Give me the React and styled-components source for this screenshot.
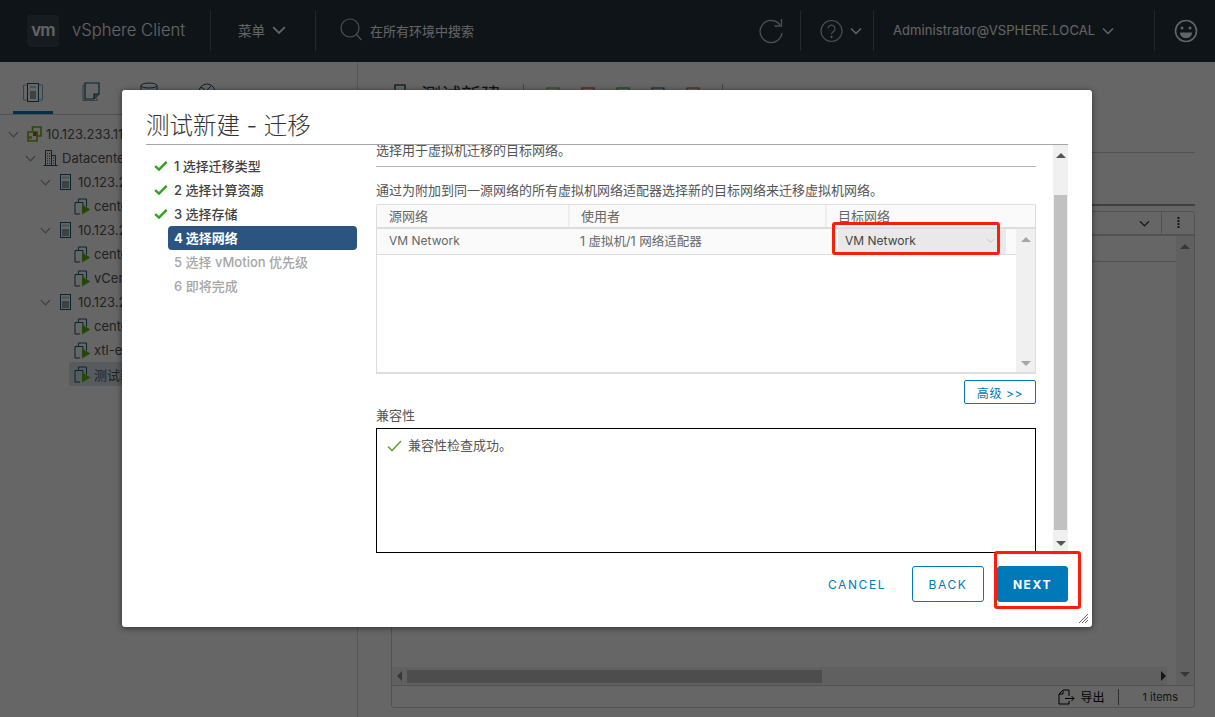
import React from 'react';
import styled, { createGlobalStyle } from 'styled-components';

const sans = `Inter, "Noto Sans CJK SC", sans-serif`;

const GlobalStyle = createGlobalStyle`
  html, body {
    margin: 0;
    padding: 0;
    background: #fff;
  }
  * {
    box-sizing: border-box;
  }
`;

const Page = styled.div`
  position: relative;
  width: 1215px;
  height: 717px;
  overflow: hidden;
  display: flex;
  flex-direction: column;
  font-family: ${sans};
  color: #565656;
`;

/* top bar */
const Header = styled.header`
  flex: 0 0 62px;
  display: flex;
  align-items: center;
  background: #25333d;
  color: #fafafa;
`;

const LogoBox = styled.div`
  width: 32px;
  height: 32px;
  margin-left: 27px;
  border-radius: 3px;
  background: #3a4650;
  display: flex;
  align-items: center;
  justify-content: center;
  padding-bottom: 2px;
  font-size: 17px;
  font-weight: 600;
  letter-spacing: -1px;
  line-height: 1;
`;

const Brand = styled.span`
  margin-left: 13px;
  width: 138px;
  padding-bottom: 2px;
  font-size: 16.6px;
  font-weight: 300;
  white-space: nowrap;
`;

const HeaderDivider = styled.span`
  flex: none;
  width: 1px;
  height: 40px;
  background: #5a666f;
`;

const MenuButton = styled.span`
  display: flex;
  align-items: center;
  gap: 7px;
  width: 104px;
  padding: 0 0 2px 27px;
  font-size: 13.5px;
`;

const Search = styled.div`
  display: flex;
  align-items: center;
  gap: 8px;
  padding: 0 0 2px 24px;
  width: 443px;
  font-size: 13px;
`;

const HeaderIcon = styled.svg`
  opacity: 0.75;
`;

const HeaderIconCell = styled.div`
  display: flex;
  align-items: center;
  gap: 7px;
  width: ${p => p.$width}px;
  padding-left: ${p => p.$pad || 0}px;
`;

const UserName = styled.span`
  font-size: 13px;
  white-space: nowrap;
  width: 202px;
  padding-bottom: 2px;
  letter-spacing: 0.08px;
`;

/* page behind the dialog */
const Body = styled.div`
  flex: 1;
  display: flex;
  min-height: 0;
`;

const Sidebar = styled.aside`
  flex: 0 0 358px;
  border-right: 1px solid #d7d7d7;
  display: flex;
  flex-direction: column;
`;

const SidebarTabs = styled.div`
  flex: 0 0 53px;
  display: flex;
  gap: 18px;
  padding: 0 0 0 13px;
  border-bottom: 1px solid #c9c9c9;
`;

const SidebarTab = styled.div`
  width: 40px;
  height: 52px;
  display: flex;
  justify-content: center;
  padding-top: 20px;
  border-bottom: 3px solid ${p => (p.$active ? '#0079b8' : 'transparent')};
`;

const Tree = styled.div`
  padding-top: 7px;
`;

const TreeRow = styled.div`
  display: flex;
  align-items: center;
  height: 24px;
  padding-left: ${p => p.$indent}px;
  margin-left: ${p => (p.$selected ? 69 : 0)}px;
  background: ${p => (p.$selected ? '#d9e4ea' : 'transparent')};
  border-radius: 3px;
  font-size: 13px;
  white-space: nowrap;
`;

const TreeChevron = styled.span`
  display: flex;
  width: ${p => p.$width}px;
`;

const TreeLabel = styled.span`
  margin-left: ${p => p.$gap}px;
`;

const Main = styled.main`
  flex: 1;
  display: flex;
  flex-direction: column;
  padding: 0 20px 9px 33px;
  min-width: 0;
`;

const TitleRow = styled.div`
  flex: 0 0 91px;
  display: flex;
  align-items: flex-start;
  padding-top: 22px;
  border-bottom: 1px solid #ccc;
`;

const TitleIcon = styled.svg`
  margin-left: 3px;
`;

const PageTitle = styled.span`
  margin-left: 15px;
  width: 102px;
  font-size: 20px;
  line-height: 24px;
  color: #333;
`;

const TitleDivider = styled.span`
  width: 1px;
  height: 30px;
  background: #aaa;
`;

const ActionIcons = styled.div`
  display: flex;
  gap: 21px;
  width: 198px;
  padding: 3px 0 0 22px;
`;

const TabsArea = styled.div`
  flex: 0 0 53px;
  border-bottom: 2px solid #a0a0a0;
`;

const GridCard = styled.section`
  flex: 1;
  margin-top: 5px;
  border: 1px solid #ccc;
  border-radius: 3px;
  display: flex;
  flex-direction: column;
  min-height: 0;
`;

const GridToolbar = styled.div`
  flex: 0 0 24px;
  display: flex;
  justify-content: flex-end;
  align-items: center;
  border-bottom: 2px solid #ccc;
`;

const ToolbarCell = styled.div`
  width: 33px;
  height: 100%;
  display: flex;
  align-items: center;
  justify-content: center;
  border-left: ${p => (p.$divided ? '1px solid #ccc' : 'none')};
`;

const GridBody = styled.div`
  flex: 1;
  display: flex;
  min-height: 0;
`;

const GridRows = styled.div`
  flex: 1;
`;

const GridRow = styled.div`
  height: 26px;
  border-bottom: 1px solid #ccc;
`;

const GridScroll = styled.div`
  flex: 0 0 18px;
  background: #f0f0f0;
  display: flex;
  flex-direction: column;
  justify-content: space-between;
  align-items: center;
  padding: 7px 0;
`;

const GridHScroll = styled.div`
  flex: 0 0 18px;
  display: flex;
  align-items: center;
  background: #f0f0f0;
  padding-left: 4px;
  margin-top: -18px;
  margin-right: 27px;
  position: relative;
`;

const HThumb = styled.div`
  width: 415px;
  height: 13px;
  margin-left: 4px;
  background: #c1c1c1;
`;

const HScrollEnd = styled.span`
  margin-left: auto;
  display: flex;
`;

const GridFooter = styled.div`
  flex: 0 0 22px;
  display: flex;
  align-items: center;
  justify-content: flex-end;
  border-top: 1px solid #ccc;
  font-size: 11px;
  padding-right: 16px;
  color: #333;
`;

const ExportText = styled.span`
  margin-left: 5px;
  font-size: 12px;
  color: #000;
`;

const FooterDivider = styled.span`
  width: 1px;
  height: 16px;
  margin: 0 23px 0 14px;
  background: #777;
`;

/* dialog */
const Scrim = styled.div`
  position: absolute;
  inset: 0;
  background: rgba(0, 0, 0, 0.6);
`;

const Dialog = styled.div`
  position: absolute;
  left: 122px;
  top: 90px;
  width: 970px;
  height: 537px;
  padding: 0 24px;
  background: #fff;
  border-radius: 3px;
  box-shadow: 0 1px 6px rgba(0, 0, 0, 0.55);
  display: flex;
  flex-direction: column;
  font-size: 13px;
`;

const DialogTitle = styled.h1`
  flex: 0 0 55px;
  margin: 0;
  padding-top: 19px;
  font-size: 23.5px;
  line-height: 34px;
  font-weight: 300;
  color: #333;
  border-bottom: 1px solid #a6a6a6;
`;

const DialogBody = styled.div`
  flex: 1;
  display: flex;
  min-height: 0;
`;

const Steps = styled.ol`
  flex: 0 0 230px;
  list-style: none;
  margin: 0;
  padding: 9px 19px 0 0;
`;

const Step = styled.li`
  display: flex;
  align-items: center;
  height: 24px;
  padding-left: 8px;
  font-size: 13px;
  color: ${p => (p.$state === 'todo' ? '#a6a6a6' : '#3f3f3f')};
`;

const StepInner = styled.div`
  display: flex;
  align-items: center;
  height: 100%;
  flex: 1;
  margin-left: ${p => (p.$active ? '14px' : '0')};
  padding: ${p => (p.$active ? '0 0 0 6px' : '0')};
  background: ${p => (p.$active ? '#2b5580' : 'transparent')};
  border-radius: 4px;
  color: ${p => (p.$active ? '#fff' : 'inherit')};
  font-weight: ${p => (p.$active ? 700 : 500)};
`;

const StepLabel = styled.span`
  padding-bottom: 2px;
`;

const StepCheck = styled.span`
  display: flex;
  width: 14px;
  margin-right: 6px;
`;

const ContentPane = styled.div`
  flex: 1;
  min-width: 0;
  overflow: hidden;
  padding-right: 17px;
`;

const ScrolledContent = styled.div`
  margin-top: -4px;
  display: flex;
  flex-direction: column;
`;

const Lead = styled.div`
  line-height: 18px;
  padding-bottom: 7px;
  border-bottom: 1px solid #b5b5b5;
  color: #555;
`;

const Hint = styled.div`
  margin-top: 14px;
  line-height: 18px;
  color: #555;
`;

const NetworkTable = styled.div`
  margin-top: 5px;
  height: 170px;
  border: 1px solid #ddd;
  border-bottom-width: 2px;
  border-radius: 2px 2px 0 0;
  display: flex;
  flex-direction: column;
  font-size: 12.5px;
`;

const TableHead = styled.div`
  flex: 0 0 24px;
  display: grid;
  grid-template-columns: 191px 257px 1fr;
  background: #fafafa;
  border-bottom: 2px solid #ddd;
`;

const HeadCell = styled.div`
  display: flex;
  align-items: center;
  padding: 0 0 2px ${p => (p.$first ? 12 : 11)}px;
  font-size: 13px;
  color: #666;
  border-left: ${p => (p.$first ? 'none' : '2px solid #eee')};
`;

const TableMain = styled.div`
  flex: 1;
  display: flex;
  min-height: 0;
`;

const TableRows = styled.div`
  flex: 1;
`;

const NetworkRow = styled.div`
  height: 26px;
  display: grid;
  grid-template-columns: 191px 257px 1fr;
  border-bottom: 1px solid #ddd;
  background: #fafafa;
`;

const RowCell = styled.div`
  display: flex;
  align-items: center;
  padding: 0 0 2px 12px;
  font-size: ${p => p.$size || 12.5}px;
  color: #666;
`;

const SelectCell = styled.div`
  display: flex;
  align-items: center;
  justify-content: space-between;
  margin: 0 10px 0 13px;
  padding: 0 11px 2px 7px;
  background: #e9e9e9;
  font-size: 12px;
  color: #444;
`;

const TableScroll = styled.div`
  flex: 0 0 19px;
  background: #f0f0f0;
  display: flex;
  flex-direction: column;
  justify-content: space-between;
  align-items: center;
  padding: 7px 0 5px;
`;

const AdvancedRow = styled.div`
  display: flex;
  justify-content: flex-end;
  margin-top: 6px;
`;

const AdvancedButton = styled.button`
  width: 72px;
  height: 24px;
  padding: 0;
  background: #fff;
  border: 1px solid #0079b8;
  border-radius: 2px;
  color: #0079b8;
  font-family: ${sans};
  font-size: 12px;
  letter-spacing: 0.6px;
`;

const SectionLabel = styled.div`
  height: 24px;
  line-height: 18px;
  padding-top: 2px;
  color: #555;
`;

const ResultBox = styled.div`
  height: 125px;
  border: 1px solid #000;
  padding: 7px 10px;
  display: flex;
  align-items: flex-start;
  gap: 6px;
  line-height: 18px;
  color: #555;
`;

const ResultCheck = styled.span`
  display: flex;
  margin-top: 4px;
`;

const PaneScroll = styled.div`
  flex: 0 0 15px;
  background: #f0f0f0;
  display: flex;
  flex-direction: column;
  align-items: center;
  padding: 7px 0 5px;
`;

const PaneThumb = styled.div`
  width: 13px;
  height: 335px;
  margin: 36px 0 10px;
  background: #c1c1c1;
`;

const DialogFooter = styled.footer`
  flex: 0 0 72px;
  display: flex;
  justify-content: flex-end;
  align-items: flex-start;
  padding-top: 11px;
`;

const FooterButton = styled.button`
  width: ${p => p.$width}px;
  height: 36px;
  margin-left: ${p => p.$gap}px;
  padding: 0;
  border-radius: 3px;
  border: 1px solid ${p => (p.$kind === 'link' ? 'transparent' : '#0079b8')};
  background: ${p => (p.$kind === 'primary' ? '#0079b8' : '#fff')};
  color: ${p => (p.$kind === 'primary' ? '#fff' : '#0079b8')};
  font-family: ${sans};
  font-size: 12px;
  font-weight: ${p => (p.$kind === 'primary' ? 700 : 400)};
  letter-spacing: 1.6px;
`;

const ResizeGrip = styled.svg`
  position: absolute;
  right: 4px;
  bottom: 4px;
`;

const Annotation = styled.div`
  position: absolute;
  left: ${p => p.$x}px;
  top: ${p => p.$y}px;
  width: ${p => p.$w}px;
  height: ${p => p.$h}px;
  border: 3px solid #ff1c0d;
  border-radius: 3px;
`;

const Chevron = ({ size = 12, color = 'currentColor', width = 1.5 }) => (
  <svg width={size} height={size} viewBox="0 0 12 12" fill="none">
    <path d="M1 3.5 6 8.5 11 3.5" stroke={color} strokeWidth={width} />
  </svg>
);

const Arrow = ({ dir, color = '#8c8c8c' }) => {
  const points = {
    up: '0,6 5,1 10,6',
    down: '0,1 5,6 10,1',
    left: '6,0 1,5 6,10',
    right: '1,0 6,5 1,10',
  }[dir];
  return (
    <svg width={dir === 'up' || dir === 'down' ? 10 : 7} height={dir === 'up' || dir === 'down' ? 7 : 10}>
      <polygon points={points} fill={color} />
    </svg>
  );
};

const GreenCheck = () => (
  <svg width="14" height="12" viewBox="0 0 14 12" fill="none">
    <path d="M1.2 6.2 5 9.6 12.6 1.8" stroke="#2fa31c" strokeWidth="2.4" />
  </svg>
);

const VmIcon = () => (
  <svg width="17" height="17" viewBox="0 0 17 17" fill="none">
    <path d="M4.5 4V1h8v7.5" stroke="#0f5a7c" strokeWidth="1" />
    <path d="M1 4.5h8V8M1 4.5V16h5" stroke="#0f5a7c" strokeWidth="1" />
    <polygon points="8,6.5 16.5,11.5 8,16.5" fill="#60b515" />
  </svg>
);

const HostIcon = () => (
  <svg width="11" height="16" viewBox="0 0 11 16" fill="none">
    <rect x="0.5" y="0.5" width="10" height="15" stroke="#0f5a7c" />
    <rect x="2" y="7" width="7" height="7" fill="#9aa5ab" />
    <rect x="2" y="2.5" width="7" height="2" fill="#c6ccd0" />
  </svg>
);

const DatacenterIcon = () => (
  <svg width="15" height="16" viewBox="0 0 15 16" fill="none" stroke="#0f5a7c">
    <path d="M.5 15.5h14M2.5 15.5V.5h6v15M8.5 5.5h4v10" />
    <path d="M4 3.5h3M4 6h3M4 8.500h3M4 11h3M4 13.500h3M10 8h1.500M10 10.500h1.500M10 13h1.500" strokeDasharray="1 1" />
  </svg>
);

const ClusterIcon = () => (
  <svg width="15" height="16" viewBox="0 0 15 16" fill="none">
    <path d="M5.500 5V1h8.500v9H10M1 6h9v9H1z" stroke="#60b515" strokeWidth="1.6" />
    <rect x="6" y="6" width="3.500" height="4" fill="#c25400" />
    <rect x="2" y="10" width="3" height="3" fill="#f5a623" />
  </svg>
);

const Page1Icon = () => (
  <svg width="20" height="20" viewBox="0 0 20 20" fill="none" stroke="#0f5a7c">
    <path d="M5 3H.5v15H5M15 3h4.500v15H15" stroke="#8ea4b1" />
    <rect x="4.500" y="1.500" width="11" height="18" />
    <rect x="7" y="9" width="6" height="8" fill="#9aa5ab" stroke="none" />
    <rect x="7" y="4" width="6" height="2" fill="#c6ccd0" stroke="none" />
  </svg>
);

const NoteIcon = () => (
  <svg width="18" height="20" viewBox="0 0 18 20" fill="none" stroke="#0f5a7c" strokeWidth="1.2">
    <path d="M3 3H1v15.500h14V16" stroke="#8ea4b1" />
    <path d="M3 1h14v11l-5 5H3z" />
    <path d="M12 17v-5h5" fill="#9aa5ab" />
  </svg>
);

const DiskIcon = () => (
  <svg width="18" height="20" viewBox="0 0 18 20" fill="none" stroke="#0f5a7c">
    <ellipse cx="9" cy="3.500" rx="8" ry="2.500" />
    <path d="M1 3.500v13c0 1.400 3.600 2.500 8 2.500s8-1.100 8-2.500v-13" />
  </svg>
);

const GlobeIcon = () => (
  <svg width="18" height="20" viewBox="0 0 18 20" fill="none" stroke="#0f5a7c">
    <circle cx="9" cy="10" r="8" />
    <path d="M3 5l5 4 6-6M8 9l2 9" />
  </svg>
);

const treeRows = [
  { id: 'vc', indent: 8, chevronWidth: 19, icon: <ClusterIcon />, label: '10.123.233.110', gap: 4 },
  { id: 'dc', indent: 25, chevronWidth: 18, icon: <DatacenterIcon />, label: 'Datacenter', gap: 4 },
  { id: 'h1', indent: 40, chevronWidth: 20, icon: <HostIcon />, label: '10.123.233.111', gap: 7 },
  { id: 'v1', indent: 74, icon: <VmIcon />, label: 'centos7', gap: 3 },
  { id: 'h2', indent: 40, chevronWidth: 20, icon: <HostIcon />, label: '10.123.233.112', gap: 7 },
  { id: 'v2', indent: 74, icon: <VmIcon />, label: 'centos7-2', gap: 3 },
  { id: 'v3', indent: 74, icon: <VmIcon />, label: 'vCenter', gap: 3 },
  { id: 'h3', indent: 40, chevronWidth: 20, icon: <HostIcon />, label: '10.123.233.113', gap: 7 },
  { id: 'v4', indent: 74, icon: <VmIcon />, label: 'centos7-3', gap: 3 },
  { id: 'v5', indent: 74, icon: <VmIcon />, label: 'xtl-esxi', gap: 3 },
  { id: 'v6', indent: 5, icon: <VmIcon />, label: '测试新建', gap: 3, selected: true },
];

const steps = [
  { label: '1 选择迁移类型', state: 'done' },
  { label: '2 选择计算资源', state: 'done' },
  { label: '3 选择存储', state: 'done' },
  { label: '4 选择网络', state: 'active' },
  { label: '5 选择 vMotion 优先级', state: 'todo' },
  { label: '6 即将完成', state: 'todo' },
];

const actionColors = ['#60b515', '#e12200', '#1d9a1d', '#0f5a7c', '#c25400'];

const App = () => (
  <Page>
    <GlobalStyle />
    <Header>
      <LogoBox>vm</LogoBox>
      <Brand>vSphere Client</Brand>
      <HeaderDivider />
      <MenuButton>
        菜单
        <Chevron size={14} />
      </MenuButton>
      <HeaderDivider />
      <Search>
        <HeaderIcon width="22" height="24" viewBox="0 0 22 24" fill="none" stroke="currentColor" strokeWidth="1.2">
          <circle cx="10" cy="10" r="9" />
          <path d="M16.500 16.500 21.500 22" />
        </HeaderIcon>
        在所有环境中搜索
      </Search>
      <HeaderIconCell $width={41}>
        <HeaderIcon width="24" height="26" viewBox="0 0 24 26" fill="none" stroke="currentColor" strokeWidth="1.3">
          <path d="M21 7A11 11 0 1 0 23 15" />
          <path d="M22.500 1v7h-7" />
        </HeaderIcon>
      </HeaderIconCell>
      <HeaderDivider />
      <HeaderIconCell $width={72} $pad={19}>
        <HeaderIcon width="23" height="24" viewBox="0 0 23 24" fill="none" stroke="currentColor" strokeWidth="1.1">
          <circle cx="11.500" cy="12" r="10.500" />
          <path d="M8 9.500a3.500 3.500 0 1 1 5.500 3c-1.500 1-2 1.500-2 3" />
          <circle cx="11.500" cy="18" r="0.600" />
        </HeaderIcon>
        <Chevron size={12} />
      </HeaderIconCell>
      <HeaderDivider />
      <HeaderIconCell $width={280} $pad={19}>
        <UserName>Administrator@VSPHERE.LOCAL</UserName>
        <Chevron size={12} />
      </HeaderIconCell>
      <HeaderDivider />
      <HeaderIconCell $width={60} $pad={19}>
        <svg width="24" height="24" viewBox="0 0 24 24" fill="none" stroke="currentColor">
          <circle cx="12" cy="12" r="10.500" strokeWidth="1.6" />
          <circle cx="8" cy="9" r="1.500" fill="currentColor" stroke="none" />
          <circle cx="16" cy="9" r="1.500" fill="currentColor" stroke="none" />
          <path d="M6 13.500h12c0 3.500-2.500 5.500-6 5.500s-6-2-6-5.500z" fill="currentColor" stroke="none" />
        </svg>
      </HeaderIconCell>
    </Header>

    <Body>
      <Sidebar>
        <SidebarTabs>
          <SidebarTab $active><Page1Icon /></SidebarTab>
          <SidebarTab><NoteIcon /></SidebarTab>
          <SidebarTab><DiskIcon /></SidebarTab>
          <SidebarTab><GlobeIcon /></SidebarTab>
        </SidebarTabs>
        <Tree>
          {treeRows.map(row => (
            <TreeRow key={row.id} $indent={row.indent} $selected={row.selected}>
              {row.chevronWidth && (
                <TreeChevron $width={row.chevronWidth}>
                  <Chevron size={11} color="#8a8a8a" width={1.2} />
                </TreeChevron>
              )}
              {row.icon}
              <TreeLabel $gap={row.gap}>{row.label}</TreeLabel>
            </TreeRow>
          ))}
        </Tree>
      </Sidebar>
      <Main>
        <TitleRow>
          <TitleIcon width="12" height="16" viewBox="0 0 12 16" fill="none" stroke="#0f5a7c" strokeWidth="1.4">
            <rect x="1" y="1" width="10" height="14" />
          </TitleIcon>
          <PageTitle>测试新建</PageTitle>
          <TitleDivider />
          <ActionIcons>
            {actionColors.map(color => (
              <svg key={color} width="14" height="14">
                <rect x="1" y="1" width="12" height="12" fill="none" stroke={color} />
              </svg>
            ))}
          </ActionIcons>
          <TitleDivider />
        </TitleRow>
        <TabsArea />
        <GridCard>
          <GridToolbar>
            <ToolbarCell>
              <Chevron size={11} color="#444" width={1.4} />
            </ToolbarCell>
            <ToolbarCell $divided>
              <svg width="3" height="12">
                <path d="M1.500 0v12" stroke="#333" strokeWidth="2" strokeDasharray="2 1" />
              </svg>
            </ToolbarCell>
          </GridToolbar>
          <GridBody>
            <GridRows>
              <GridRow />
            </GridRows>
            <GridScroll>
              <Arrow dir="up" />
              <Arrow dir="down" />
            </GridScroll>
          </GridBody>
          <GridHScroll>
            <Arrow dir="left" />
            <HThumb />
            <HScrollEnd>
              <Arrow dir="right" color="#333" />
            </HScrollEnd>
          </GridHScroll>
          <GridFooter>
            <svg width="17" height="17" viewBox="0 0 17 17" fill="none" stroke="#000">
              <path d="M11 8V2H5L1 6v10h10v-3M5 2v4H1M7 10.500h9M13.500 8l2.500 2.500L13.500 13" />
            </svg>
            <ExportText>导出</ExportText>
            <FooterDivider />
            1 items
          </GridFooter>
        </GridCard>
      </Main>
    </Body>

    <Scrim />

    <Dialog>
      <DialogTitle>测试新建 - 迁移</DialogTitle>
      <DialogBody>
        <Steps>
          {steps.map(step => (
            <Step key={step.label} $state={step.state}>
              <StepInner $active={step.state === 'active'}>
                {step.state !== 'active' && (
                  <StepCheck>{step.state === 'done' && <GreenCheck />}</StepCheck>
                )}
                <StepLabel>{step.label}</StepLabel>
              </StepInner>
            </Step>
          ))}
        </Steps>
        <ContentPane>
          <ScrolledContent>
            <Lead>选择用于虚拟机迁移的目标网络。</Lead>
            <Hint>通过为附加到同一源网络的所有虚拟机网络适配器选择新的目标网络来迁移虚拟机网络。</Hint>
            <NetworkTable>
              <TableHead>
                <HeadCell $first>源网络</HeadCell>
                <HeadCell>使用者</HeadCell>
                <HeadCell>目标网络</HeadCell>
              </TableHead>
              <TableMain>
                <TableRows>
                  <NetworkRow>
                    <RowCell $size={12}>VM Network</RowCell>
                    <RowCell>1 虚拟机/1 网络适配器</RowCell>
                    <SelectCell>
                      VM Network
                      <Chevron size={9} color="#c4c4c4" width={1.2} />
                    </SelectCell>
                  </NetworkRow>
                </TableRows>
                <TableScroll>
                  <Arrow dir="up" color="#a6a6a6" />
                  <Arrow dir="down" color="#a6a6a6" />
                </TableScroll>
              </TableMain>
            </NetworkTable>
            <AdvancedRow>
              <AdvancedButton>高级 &gt;&gt;</AdvancedButton>
            </AdvancedRow>
            <SectionLabel>兼容性</SectionLabel>
            <ResultBox>
              <ResultCheck>
                <svg width="15" height="12" viewBox="0 0 15 12" fill="none">
                  <path d="M1 6.500 5 10.500 14 1" stroke="#6aa338" strokeWidth="1.6" />
                </svg>
              </ResultCheck>
              兼容性检查成功。
            </ResultBox>
          </ScrolledContent>
        </ContentPane>
        <PaneScroll>
          <Arrow dir="up" color="#555" />
          <PaneThumb />
          <Arrow dir="down" color="#555" />
        </PaneScroll>
      </DialogBody>
      <DialogFooter>
        <FooterButton $kind="link" $width={82}>CANCEL</FooterButton>
        <FooterButton $kind="outline" $width={72} $gap={14}>BACK</FooterButton>
        <FooterButton $kind="primary" $width={71} $gap={13}>NEXT</FooterButton>
      </DialogFooter>
      <ResizeGrip width="9" height="9" viewBox="0 0 9 9" stroke="#666">
        <path d="M0 9 9 0M3 9 9 3M6 9 9 6" />
      </ResizeGrip>
    </Dialog>

    <Annotation $x={832} $y={222} $w={168} $h={33} />
    <Annotation $x={994} $y={551} $w={87} $h={58} />
  </Page>
);

export default App;
